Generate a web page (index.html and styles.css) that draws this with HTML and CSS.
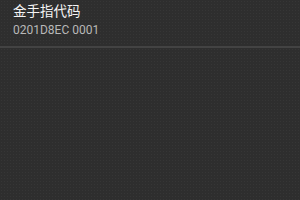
FILE: index.html
```html
<!DOCTYPE html>
<html lang="zh">
<head>
    <meta charset="UTF-8">
    <title>金手指代码</title>
    <link rel="stylesheet" href="styles.css">
</head>
<body>
    <div class="list">
        <div class="item">
            <div class="item-title">金手指代码</div>
            <div class="item-code">0201D8EC 0001</div>
        </div>
    </div>
</body>
</html>
```

FILE: styles.css
```css
html, body {
    height: 100%;
}
body {
    margin: 0;
    background-color: #2e2e2e;
    background-image: radial-gradient(circle, rgba(255, 255, 255, 0.04) 1px, transparent 1px);
    background-size: 3px 3px;
    font-family: Roboto, "Noto Sans CJK SC", sans-serif;
}
.item {
    height: 48px;
    padding: 2px 13px 0;
    box-sizing: border-box;
    border-bottom: 2px solid #434343;
}
.item-title {
    color: #f4f4f4;
    font-size: 13.5px;
    line-height: 18px;
}
.item-code {
    color: #b8b8b8;
    font-size: 12px;
    line-height: 16px;
    margin-top: 2px;
}
```
